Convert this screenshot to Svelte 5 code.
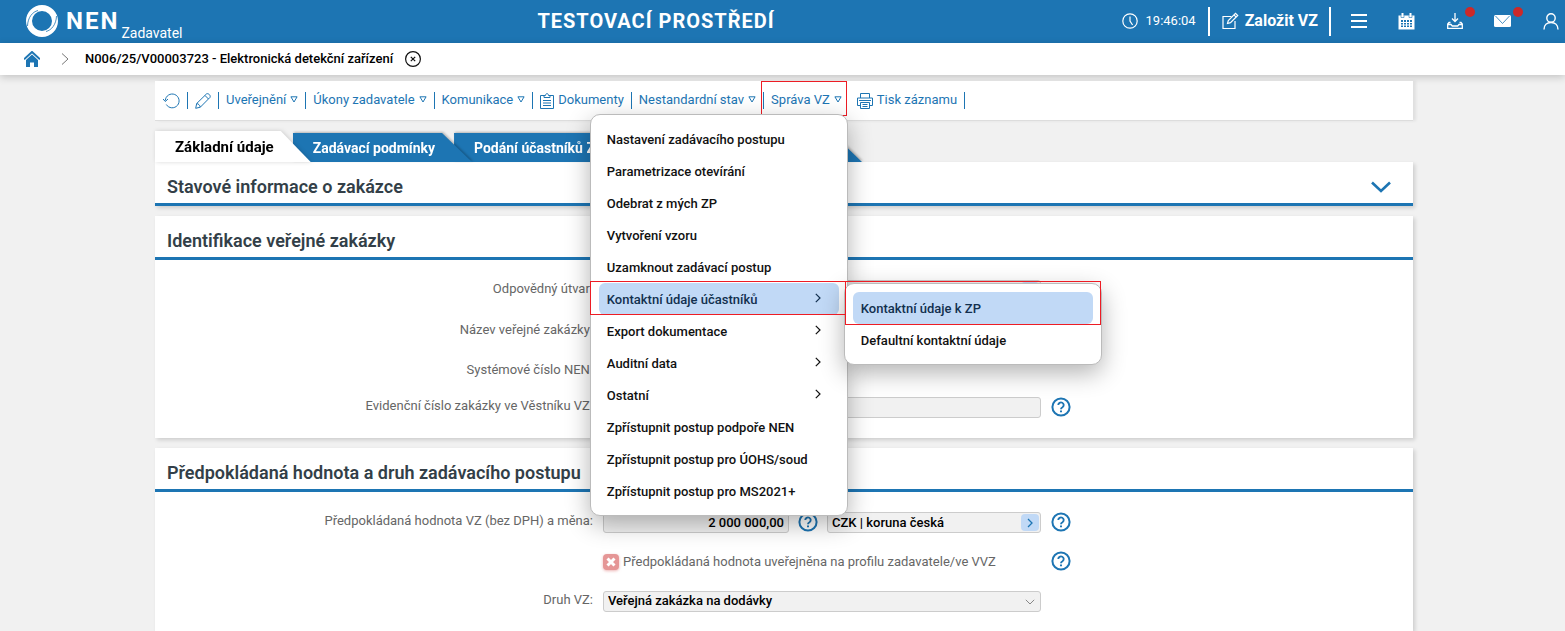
<script lang="ts">
  interface MenuItem {
    label: string;
    children?: string[];
  }

  const tabs = ['Základní údaje', 'Zadávací podmínky', 'Podání účastníků ZP'];

  const adminMenu: MenuItem[] = [
    { label: 'Nastavení zadávacího postupu' },
    { label: 'Parametrizace otevírání' },
    { label: 'Odebrat z mých ZP' },
    { label: 'Vytvoření vzoru' },
    { label: 'Uzamknout zadávací postup' },
    { label: 'Kontaktní údaje účastníků', children: ['Kontaktní údaje k ZP', 'Defaultní kontaktní údaje'] },
    { label: 'Export dokumentace', children: [] },
    { label: 'Auditní data', children: [] },
    { label: 'Ostatní', children: [] },
    { label: 'Zpřístupnit postup podpoře NEN' },
    { label: 'Zpřístupnit postup pro ÚOHS/soud' },
    { label: 'Zpřístupnit postup pro MS2021+' },
  ];

  let activeTab = $state(0);
  let menuOpen = $state(true);
  let openItem = $state('Kontaktní údaje účastníků');
  let activeChild = $state('Kontaktní údaje k ZP');
  let statusOpen = $state(false);

  let department = $state('');
  let title = $state('');
  let bulletinNo = $state('');
  let amount = $state('2 000 000,00');
  let currency = $state('CZK | koruna česká');
  let kind = $state('Veřejná zakázka na dodávky');
  let published = $state(false);
</script>

{#snippet help()}
  <button class="help" aria-label="Nápověda">
    <svg viewBox="0 0 20 20" width="20" height="20" fill="none" stroke="#1d75b3">
      <circle cx="10" cy="10" r="8.6" stroke-width="2" />
      <path d="M7.3 8.1a2.7 2.6 0 1 1 4.2 2.1c-1 .6-1.5 1-1.5 2" stroke-width="1.9" />
      <path d="M9 13.4h2v1.8h-2z" fill="#1d75b3" stroke="none" />
    </svg>
  </button>
{/snippet}

{#snippet lookup()}
  <button class="lookup" aria-label="Vybrat">
    <svg viewBox="0 0 8 10" width="8" height="10" fill="none" stroke="#1d75b3" stroke-width="1.3"><path d="M2 1l4 4-4 4" /></svg>
  </button>
{/snippet}

{#snippet caret()}
  <svg viewBox="0 0 8 7" width="8" height="7" fill="none" stroke="currentColor"><path d="M.9 .8h6.2L4 6z" /></svg>
{/snippet}

<div class="page">
  <header class="topbar">
    <a class="brand" href="#home">
      <svg viewBox="0 0 32 32" width="32" height="32" fill="none">
        <circle cx="16" cy="16" r="13" stroke="#fff" stroke-width="6" />
        <path d="M1.500 21C1.800 12.500 6.500 6.800 12 5.500M30.500 11C30.200 19.500 25.500 25.200 20 26.500" stroke="#1d75b3" stroke-width=".8" />
      </svg>
      <span class="name">NEN</span>
      <span class="role">Zadavatel</span>
    </a>
    <h1>TESTOVACÍ PROSTŘEDÍ</h1>
    <div class="clock">
      <svg viewBox="0 0 16 16" width="16" height="16" fill="none" stroke="#fff" stroke-width="1.2"><circle cx="8" cy="8" r="7.200" /><path d="M8 3.500V8l2.600 4" /></svg>
      <time>19:46:04</time>
    </div>
    <button class="create">
      <svg viewBox="0 0 18 18" width="18" height="18" fill="none" stroke="#fff" stroke-width="1.200"><path d="M10.500 4.500H2v12h12V9" /><path d="M6.500 11.500l.8-3 7.200-7.200 2.200 2.200-7.200 7.200z" /><path d="M13 2.900l2.200 2.200" /></svg>
      Založit VZ
    </button>
    <nav class="tools">
      <button aria-label="Menu">
        <svg viewBox="0 0 16 16" width="16" height="16" stroke="#fff" stroke-width="2"><path d="M0 2h16M0 8h16M0 14h16" /></svg>
      </button>
      <button aria-label="Kalendář">
        <svg viewBox="0 0 17 17" width="17" height="17">
          <path d="M.5 2.500h16v14H.5z" fill="#fff" />
          <path d="M4.500 0v4M12.500 0v4" stroke="#fff" stroke-width="2" />
          <path d="M3 2.500v2h3v-2M11 2.500v2h3v-2" stroke="#1d75b3" stroke-width=".6" fill="none" />
          <path d="M3 7h11v7H3z" fill="#1d75b3" />
          <path d="M3 9.500h11M3 12h11M5.500 7v7M8.500 7v7M11.500 7v7" stroke="#fff" />
        </svg>
      </button>
      <button class="dot" aria-label="Stažené soubory">
        <svg viewBox="0 0 16 16" width="16" height="16" fill="none" stroke="#fff" stroke-width="1.300"><path d="M8 0v8M5 5.500l3 3 3-3" /><path d="M3.500 9.500H2L.7 11v4.300h14.600V11L14 9.500h-1.500M.7 11.500h3.300l1.300 1.500h5.400l1.300-1.500h3.300" /></svg>
      </button>
      <button class="dot" aria-label="Zprávy">
        <svg viewBox="0 0 17 12" width="17" height="12"><rect width="17" height="12" rx="1.500" fill="#fff" /><path d="M1.500 1l7 7.500 7-7.500" fill="none" stroke="#1d75b3" stroke-width=".8" /></svg>
      </button>
      <button aria-label="Profil">
        <svg viewBox="0 0 16 17" width="16" height="17" fill="none" stroke="#fff" stroke-width="1.400"><circle cx="8" cy="5" r="4.200" /><path d="M1 16.500c0-4.500 3-7 7-7s7 2.500 7 7" /></svg>
      </button>
    </nav>
  </header>

  <nav class="crumbs">
    <a href="#home" aria-label="Domů">
      <svg viewBox="0 0 16 16" width="16" height="16"><path d="M0 8.300L8 1l8 7.300" fill="none" stroke="#1d75b3" stroke-width="2" /><path d="M2 9l6-5.500L14 9v7h-4v-4.500H6V16H2z" fill="#1d75b3" /></svg>
    </a>
    <svg viewBox="0 0 8 12" width="8" height="12" fill="none" stroke="#777"><path d="M1 .5L7 6l-6 5.500" /></svg>
    <strong>N006/25/V00003723 - Elektronická detekční zařízení</strong>
    <button aria-label="Zavřít">
      <svg viewBox="0 0 16 16" width="16" height="16" fill="none" stroke="#111" stroke-width="1.200"><circle cx="8" cy="8" r="7.400" /><path d="M5.800 5.800l4.400 4.400M10.200 5.800l-4.400 4.400" /></svg>
    </button>
  </nav>

  <main>
    <div class="toolbar">
      <div class="entry">
        <button aria-label="Obnovit">
          <svg class="icon" viewBox="0 0 17 16" width="17" height="16" fill="none" stroke="currentColor"><path d="M2.300 7.500a6.900 6.900 0 1 1 1 4M0 6l2.300 2.500L5 6" /></svg>
        </button>
      </div>
      <div class="entry">
        <button aria-label="Upravit">
          <svg class="icon" viewBox="0 0 16 16" width="16" height="16" fill="none" stroke="currentColor"><path d="M.7 15.300l1-4.800L11.500.9c1.800-1 4.500 1.500 3.500 3.500L5.300 14.200zM10 2.500L13.500 6M1.700 10.500c1.800.3 3.200 1.700 3.600 3.700" /></svg>
        </button>
      </div>
      <div class="entry"><button>Uveřejnění {@render caret()}</button></div>
      <div class="entry"><button>Úkony zadavatele {@render caret()}</button></div>
      <div class="entry"><button>Komunikace {@render caret()}</button></div>
      <div class="entry">
        <button>
          <svg class="icon" viewBox="0 0 14 16" width="14" height="16" fill="none" stroke="currentColor"><path d="M4 2.500H.5v13h13v-13H10M4 4.500v-2h1.500c0-2.500 3-2.500 3 0H10v2zM3 7.500h8M3 10h8M3 12.500h8" /></svg>
          Dokumenty
        </button>
      </div>
      <div class="entry"><button>Nestandardní stav {@render caret()}</button></div>
      <div class="entry bare marked">
        <button aria-expanded={menuOpen} onclick={() => (menuOpen = !menuOpen)}>Správa VZ {@render caret()}</button>
        {#if menuOpen}
          <ul class="menu">
            {#each adminMenu as item (item.label)}
              {@const open = item.label === openItem}
              <li class:marked={open}>
                <button class:active={open} onclick={() => (openItem = item.label)}>
                  {item.label}
                  {#if item.children}
                    <svg viewBox="0 0 6 10" width="6" height="10" fill="none" stroke="currentColor" stroke-width="1.200"><path d="M.8 .8L5 5 .8 9.200" /></svg>
                  {/if}
                </button>
                {#if open && item.children?.length}
                  <ul class="menu sub">
                    {#each item.children as child (child)}
                      <li class:marked={child === activeChild}>
                        <button class:active={child === activeChild} onclick={() => (activeChild = child)}>{child}</button>
                      </li>
                    {/each}
                  </ul>
                {/if}
              </li>
            {/each}
          </ul>
        {/if}
      </div>
      <div class="entry">
        <button>
          <svg class="icon" viewBox="0 0 16 16" width="16" height="16" fill="none" stroke="currentColor"><path d="M3.500 5V.5h9V5M3.500 12.500h-3V5h15v7.500h-3M3.500 9.500h9v6h-9zM2 7.500h12M5.500 11.500h5M5.500 13.500h5" /></svg>
          Tisk záznamu
        </button>
      </div>
    </div>

    <div class="tabs" role="tablist">
      {#each tabs as tab, i}
        <div class="tab" class:current={i === activeTab} style:z-index={tabs.length - i}>
          <button role="tab" aria-selected={i === activeTab} onclick={() => (activeTab = i)}>{tab}</button>
        </div>
      {/each}
    </div>

    <section class="panel">
      <h2>
        Stavové informace o zakázce
        <button aria-label="Rozbalit" aria-expanded={statusOpen} onclick={() => (statusOpen = !statusOpen)}>
          <svg viewBox="0 0 20 12" width="20" height="12" fill="none" stroke="#1d75b3" stroke-width="2.600"><path d="M1 1.500l9 8.500 9-8.500" /></svg>
        </button>
      </h2>
    </section>

    <section class="panel">
      <h2>Identifikace veřejné zakázky</h2>
      <div class="form">
        <div class="row">
          <label for="department">Odpovědný útvar:</label>
          <div class="field"><input id="department" bind:value={department} />{@render lookup()}</div>
        </div>
        <div class="row tall">
          <label for="title">Název veřejné zakázky:</label>
          <div class="field"><input id="title" bind:value={title} /></div>
        </div>
        <div class="row text">
          <span class="label">Systémové číslo NEN:</span>
        </div>
        <div class="row">
          <label for="bulletin">Evidenční číslo zakázky ve Věstníku VZ:</label>
          <div class="field"><input id="bulletin" bind:value={bulletinNo} /></div>
          {@render help()}
        </div>
      </div>
    </section>

    <section class="panel rest">
      <h2>Předpokládaná hodnota a druh zadávacího postupu</h2>
      <div class="form">
        <div class="row">
          <label for="amount">Předpokládaná hodnota VZ (bez DPH) a měna:</label>
          <div class="pair">
            <div class="field amount"><input id="amount" bind:value={amount} /></div>
            {@render help()}
            <div class="field"><input aria-label="Měna" bind:value={currency} />{@render lookup()}</div>
          </div>
          {@render help()}
        </div>
        <div class="row check">
          <span class="label"></span>
          <label class="tick">
            <span class="box">
              <input type="checkbox" bind:checked={published} />
              <svg viewBox="0 0 16 16" width="16" height="16" stroke="#fff" stroke-width="3"><path d="M4.500 4.500l7 7M11.500 4.500l-7 7" /></svg>
            </span>
            Předpokládaná hodnota uveřejněna na profilu zadavatele/ve VVZ
          </label>
          {@render help()}
        </div>
        <div class="row">
          <label for="kind">Druh VZ:</label>
          <div class="field">
            <select id="kind" bind:value={kind}>
              <option>Veřejná zakázka na dodávky</option>
            </select>
            <svg class="arrow" viewBox="0 0 10 6" width="10" height="6" fill="none" stroke="#888"><path d="M.8 .8L5 5 9.200 .8" /></svg>
          </div>
        </div>
      </div>
    </section>
  </main>
</div>

<style>
  :global(body) {
    background: #f1f1f1;
    font: 13px/16px Roboto, "Noto Sans", sans-serif;
    color: #000;
  }
  .page {
    display: flex;
    flex-direction: column;
    min-height: 100vh;
  }
  .page * { box-sizing: border-box; }
  button {
    display: inline-flex;
    align-items: center;
    padding: 0;
    border: 0;
    background: none;
    font: inherit;
    color: inherit;
    white-space: nowrap;
    cursor: pointer;
  }
  svg { flex: none; display: block; }
  ul { list-style: none; margin: 0; padding: 0; }

  .topbar {
    display: flex;
    align-items: center;
    height: 43px;
    padding: 0 6px 1px 26px;
    background: #1d75b3;
    color: #fff;
  }
  .brand { display: flex; align-items: center; color: #fff; text-decoration: none; }
  .name { margin-left: 8px; font-size: 24px; font-weight: 700; letter-spacing: 2px; }
  .role { align-self: flex-end; margin-left: 2px; font-size: 14px; line-height: 8px; }
  h1 { margin: 0 auto; padding-left: 8px; font-size: 20px; font-weight: 700; letter-spacing: 1px; }
  .clock {
    display: flex;
    align-items: center;
    gap: 8px;
    height: 29px;
    padding-right: 12px;
    border-right: 2px solid #fff;
  }
  .create {
    gap: 6px;
    height: 29px;
    padding: 0 11px;
    border-right: 2px solid #fff;
    font-size: 16px;
    font-weight: 700;
  }
  .tools { display: flex; gap: 31px; margin-left: 19px; }
  .tools button { position: relative; justify-content: center; width: 17px; height: 20px; }
  .dot::after {
    content: '';
    position: absolute;
    top: -4px;
    right: -12px;
    width: 10px;
    height: 10px;
    border-radius: 50%;
    background: #cc2929;
  }

  .crumbs {
    display: flex;
    align-items: center;
    height: 32px;
    padding-left: 24px;
    background: #fff;
    box-shadow: 0 2px 8px rgba(0, 0, 0, 0.2);
  }
  .crumbs a { margin-right: 21px; }
  .crumbs strong { margin: 0 12px 0 16px; font-weight: 500; }

  main {
    display: flex;
    flex-direction: column;
    flex: 1;
    padding: 6px 152px 0 155px;
  }
  .toolbar {
    display: flex;
    align-items: center;
    height: 40px;
    background: #fff;
    border-bottom: 1px solid #ddd;
    box-shadow: 3px 0 3px rgba(0, 0, 0, 0.07);
    color: #1d75b3;
  }
  .entry { position: relative; display: flex; padding: 0 7px; border-right: 1px solid #1d75b3; }
  .entry:first-child { padding-left: 8px; }
  .entry.bare { border-color: transparent; }
  .entry > button { gap: 4px; height: 17px; padding-bottom: 2px; }
  .icon { margin-top: 2px; }

  .marked::after {
    content: '';
    position: absolute;
    border: 1px solid #ed1c24;
    pointer-events: none;
    z-index: 3;
  }
  .entry.marked::after { inset: -11px 2px -7px -3px; }
  .menu .marked::after { inset: -2px -7px 0 -9px; }
  .menu {
    position: absolute;
    top: 22px;
    right: 1px;
    z-index: 10;
    width: 258px;
    padding: 8px;
    border: 1px solid #bbb;
    border-radius: 10px;
    background: #fff;
    box-shadow: 0 8px 24px rgba(0, 0, 0, 0.3);
    color: #111;
    font-weight: 500;
  }
  .menu li { position: relative; }
  .menu button {
    justify-content: space-between;
    width: 100%;
    height: 32px;
    padding: 1px 18px 0 8px;
    border-radius: 6px;
  }
  .menu button svg { margin-bottom: 3px; }
  .menu button.active { background: #c1d9f6; color: #12304f; }
  .menu.sub { top: 0; right: auto; left: calc(100% + 5px); z-index: 2; }
  .menu.sub .marked::after { inset: -11px -8px -1px -8px; }

  .tabs { display: flex; height: 31px; margin-top: 10px; }
  .tab { position: relative; padding-top: 2px; filter: drop-shadow(1px -1px 1px rgba(0, 0, 0, 0.25)); }
  .tab + .tab { margin-left: -18px; }
  .tab.current { padding-top: 0; filter: drop-shadow(1px 0 2px rgba(0, 0, 0, 0.15)); }
  .tab button {
    height: 100%;
    padding: 0 37px 0 20px;
    background: #1d75b3;
    clip-path: polygon(0 0, calc(100% - 30px) 0, 100% 100%, 0 100%);
    color: #fff;
    font-size: 14px;
    font-weight: 700;
  }
  .tab.current button { background: #fff; color: #000; font-size: 15px; }
  .tab:last-child { min-width: 408px; }
  .tab:last-child button { width: 100%; }

  .panel { background: #fff; box-shadow: 2px 2px 4px rgba(0, 0, 0, 0.15); }
  .panel + .panel { margin-top: 10px; }
  .panel.rest { flex: 1; }
  h2 {
    display: flex;
    justify-content: space-between;
    align-items: center;
    height: 44px;
    margin: 0;
    padding: 8px 22px 0 12px;
    border-bottom: 3px solid #1d75b3;
    font-size: 18px;
    font-weight: 600;
    color: #333f48;
  }
  .form { display: flex; flex-direction: column; gap: 16px; padding: 20px 0; }
  .rest .form { padding-bottom: 16px; }
  .row { display: flex; align-items: center; gap: 10px; height: 21px; }
  .row.tall { height: 29px; }
  .row.text { height: 19px; }
  .row.check { height: 26px; }
  .row > label:first-child, .label {
    width: 438px;
    padding-bottom: 3px;
    text-align: right;
    color: #666;
  }
  .row > .field, .pair, .tick { width: 438px; }
  .field { position: relative; flex: none; }
  .pair { display: flex; align-items: center; gap: 9px; flex: none; }
  .pair .field { flex: 1; }
  .pair .field.amount { flex: none; width: 186px; }
  .amount input { text-align: right; }
  .help { margin-bottom: 2px; }
  .field input, select {
    display: block;
    width: 100%;
    height: 21px;
    padding: 0 4px 1px;
    border: 1px solid #ccc;
    border-radius: 3px;
    background: #f1f1f1;
    font: 500 13px/16px Roboto, "Noto Sans", sans-serif;
    color: #000;
  }
  select { appearance: none; }
  .arrow { position: absolute; right: 6px; top: 8px; pointer-events: none; }
  .lookup {
    position: absolute;
    top: 2px;
    right: 2px;
    justify-content: center;
    width: 18px;
    height: 17px;
    border-radius: 4px;
    background: #c1d9f6;
  }
  .tick { display: flex; align-items: center; gap: 4px; flex: none; color: #666; white-space: nowrap; }
  .box { display: grid; }
  .box input, .box svg { grid-area: 1 / 1; }
  .box input {
    appearance: none;
    width: 16px;
    height: 16px;
    margin: 0;
    border-radius: 4px;
    background: #e59696;
    box-shadow: 0 1px 3px rgba(229, 150, 150, 0.7);
  }
  .box svg { position: relative; pointer-events: none; }
</style>
